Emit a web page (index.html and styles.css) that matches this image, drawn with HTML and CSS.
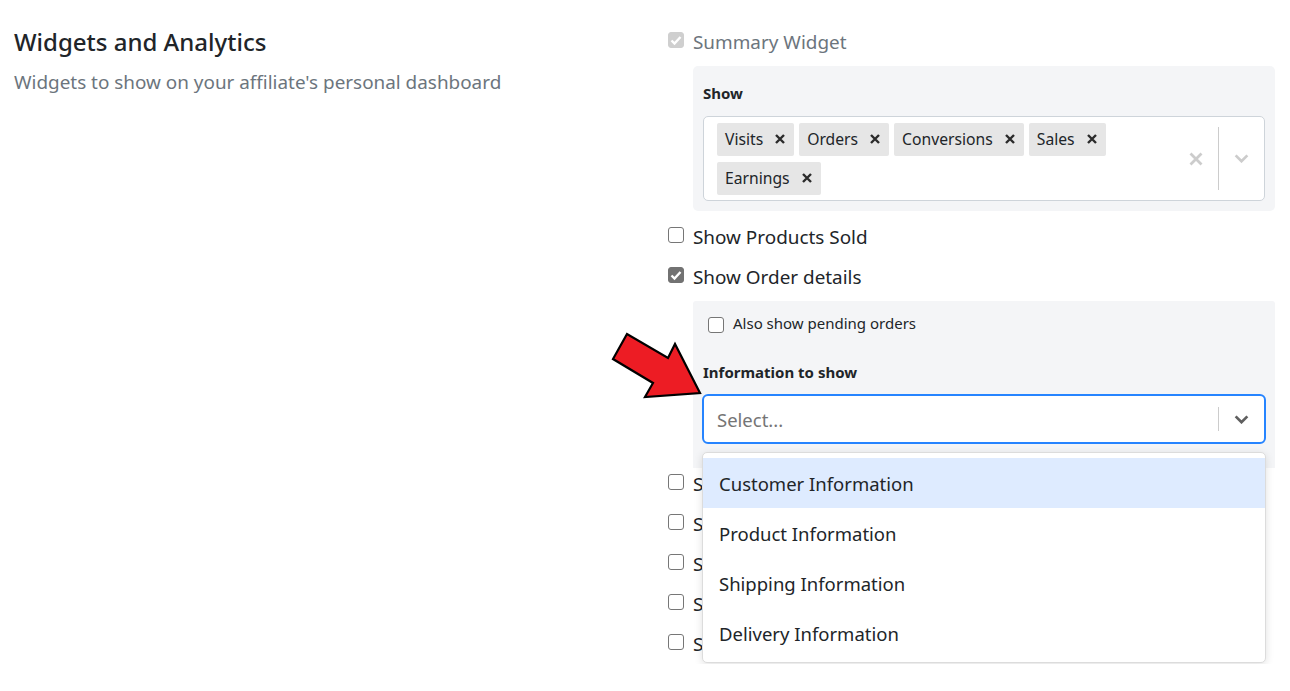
FILE: index.html
```html
<!DOCTYPE html>
<html>
<head lang="en">
    <meta charset="UTF-8">
    <title>Widgets and Analytics</title>
    <link rel="stylesheet" href="styles.css">
</head>
<body>
<div class="page">
    <div class="intro">
        <h2>Widgets and Analytics</h2>
        <p>Widgets to show on your affiliate's personal dashboard</p>
    </div>
    <div class="options">
        <div class="row muted">
            <span class="check disabled"><svg viewBox="0 0 16 16"><path d="M3.500 8.500l3 3L12.500 5"/></svg></span>
            <span>Summary Widget</span>
        </div>
        <div class="panel panel-show">
            <div class="field-label">Show</div>
            <div class="select multi">
                <div class="tags">
                    <span class="tag">Visits<svg class="x" viewBox="0 0 10 10"><path d="M1 1l8 8M9 1l-8 8"/></svg></span>
                    <span class="tag">Orders<svg class="x" viewBox="0 0 10 10"><path d="M1 1l8 8M9 1l-8 8"/></svg></span>
                    <span class="tag">Conversions<svg class="x" viewBox="0 0 10 10"><path d="M1 1l8 8M9 1l-8 8"/></svg></span>
                    <span class="tag">Sales<svg class="x" viewBox="0 0 10 10"><path d="M1 1l8 8M9 1l-8 8"/></svg></span>
                    <span class="tag">Earnings<svg class="x" viewBox="0 0 10 10"><path d="M1 1l8 8M9 1l-8 8"/></svg></span>
                </div>
                <svg class="clear" viewBox="0 0 14 14"><path d="M1.500 1.500l11 11M12.500 1.500l-11 11"/></svg>
                <span class="sep"></span>
                <svg class="chev light" viewBox="0 0 16 10"><path d="M1.500 1.500L8 8l6.500-6.500"/></svg>
            </div>
        </div>
        <div class="row">
            <span class="check"></span>
            <span>Show Products Sold</span>
        </div>
        <div class="row">
            <span class="check checked"><svg viewBox="0 0 16 16"><path d="M3.500 8.500l3 3L12.500 5"/></svg></span>
            <span>Show Order details</span>
        </div>
        <div class="panel panel-order">
            <div class="sub-row">
                <span class="check"></span>
                <span>Also show pending orders</span>
            </div>
            <div class="field-label">Information to show</div>
            <div class="select focused">
                <span class="placeholder">Select...</span>
                <span class="sep"></span>
                <svg class="chev" viewBox="0 0 16 10"><path d="M1.500 1.500L8 8l6.500-6.500"/></svg>
            </div>
            <ul class="menu">
                <li class="active">Customer Information</li>
                <li>Product Information</li>
                <li>Shipping Information</li>
                <li>Delivery Information</li>
            </ul>
        </div>
        <!-- only the first letter of these shows beside the open menu -->
        <div class="row"><span class="check"></span><span>S</span></div>
        <div class="row"><span class="check"></span><span>S</span></div>
        <div class="row"><span class="check"></span><span>S</span></div>
        <div class="row"><span class="check"></span><span>S</span></div>
        <div class="row"><span class="check"></span><span>S</span></div>
    </div>
</div>
<svg class="arrow" viewBox="0 0 100 75" width="100" height="75">
    <path d="M93 63L68 14L61 28L20 4L6 29L46 53L38 67Z"/>
</svg>
</body>
</html>
```

FILE: styles.css
```css
*{
    margin: 0;
    padding: 0;
    box-sizing: border-box;
}
ul{
    list-style: none;
}
body{
    font-family: "Noto Sans", "Open Sans", sans-serif;
    font-size: 18.900px;
    color: #212529;
    background: #fff;
    overflow: hidden;
}
.page{
    display: grid;
    grid-template-columns: 668px 607px;
    padding-top: 22px;
}
.intro{
    padding-left: 14px;
}
.intro h2{
    font-size: 24px;
    font-weight: 500;
    line-height: 40px;
}
.intro p{
    line-height: 40px;
    color: #6c757d;
}
.row{
    display: flex;
    align-items: center;
    gap: 9px;
    height: 40px;
    line-height: 40px;
}
.muted{
    color: #6c757d;
}
.check{
    flex: none;
    width: 16px;
    height: 16px;
    border: 1px solid #767676;
    border-radius: 3px;
    background: #fff;
    display: block;
    position: relative;
    top: -2px;
}
.check svg{
    display: block;
    width: 16px;
    height: 16px;
    margin: -1px;
    fill: none;
    stroke: #fff;
    stroke-width: 2.400;
}
.check.checked{
    background: #727272;
    border-color: #727272;
}
.check.disabled{
    background: #cfcfcf;
    border-color: #cfcfcf;
}
.panel{
    margin-left: 25px;
    background: #f4f5f7;
    padding: 0 10px;
    position: relative;
}
.panel-show{
    height: 145px;
    margin-top: 4px;
    margin-bottom: 6px;
    padding-top: 17px;
    border-radius: 5px;
}
.panel-order{
    height: 167px;
    margin-top: 4px;
    margin-bottom: -4px;
    padding-top: 12px;
    border-radius: 3px 3px 0 0;
}
.field-label{
    font-size: 15px;
    font-weight: 700;
    line-height: 20px;
}
.sub-row{
    display: flex;
    align-items: center;
    gap: 9px;
    padding-left: 5px;
    height: 20px;
    font-size: 15px;
    margin-bottom: 29px;
}
.sub-row .check{
    top: 2px;
}
.select{
    display: flex;
    align-items: center;
    background: #fff;
    width: 562px;
    border: 1px solid #ced4da;
    border-radius: 5px;
    padding-right: 15px;
    margin-top: 13px;
}
.multi{
    height: 85px;
    padding-left: 13px;
}
.tags{
    flex: 1;
    display: flex;
    flex-wrap: wrap;
    gap: 6px 5px;
    align-content: center;
}
.tag{
    display: flex;
    align-items: center;
    height: 33px;
    padding: 0 9px 0 8px;
    background: #e6e6e6;
    border-radius: 2px;
    font-size: 15.700px;
    gap: 12px;
}
.x{
    width: 10px;
    height: 10px;
    fill: none;
    stroke: #2b2b2b;
    stroke-width: 2.400;
}
.clear{
    width: 14px;
    height: 14px;
    margin-right: 15px;
    fill: none;
    stroke: #cccccc;
    stroke-width: 2.800;
}
.sep{
    width: 1px;
    align-self: stretch;
    background: #cccccc;
    margin: 10px 15px 10px 0;
}
.chev{
    width: 15px;
    height: 9px;
    fill: none;
    stroke: #5f5f5f;
    stroke-width: 3;
}
.chev.light{
    stroke: #cccccc;
}
.focused{
    width: 564px;
    height: 50px;
    border: 2px solid #2684ff;
    margin-top: 12px;
    margin-left: -1px;
    padding-left: 13px;
    padding-right: 15px;
    border-radius: 6px;
}
.focused .sep{
    margin-top: 11px;
    margin-bottom: 11px;
}
.placeholder{
    flex: 1;
    font-size: 18.500px;
    color: #757575;
}
.menu{
    position: absolute;
    left: 9px;
    top: 151px;
    z-index: 5;
    width: 564px;
    padding: 5px 0 4px;
    font-size: 18.500px;
    background: #fff;
    border: 1px solid #dcdcdc;
    border-radius: 5px;
    box-shadow: 0 2px 8px rgba(0,0,0,.12);
}
.menu li{
    height: 50px;
    line-height: 52px;
    padding-left: 16px;
}
.menu .active{
    background: #deebff;
}
.arrow{
    position: absolute;
    left: 607px;
    top: 330px;
    z-index: 6;
    fill: #ed1c24;
    stroke: #000;
    stroke-width: 2.200;
}
```
